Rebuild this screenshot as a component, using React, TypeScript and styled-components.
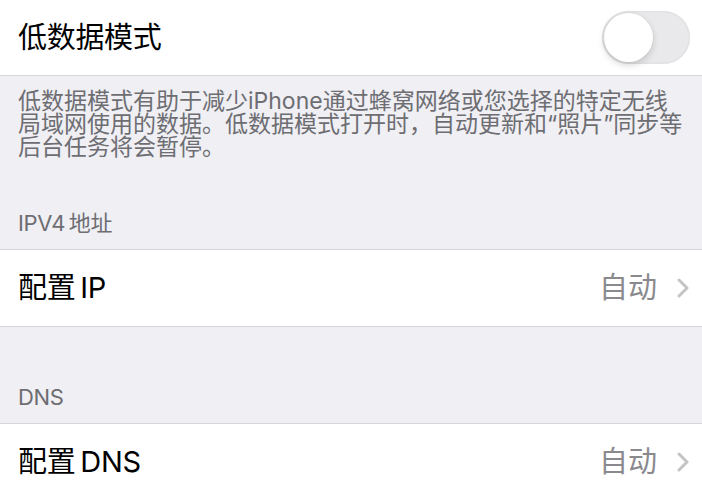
import styled, { createGlobalStyle } from 'styled-components'

const GlobalStyle = createGlobalStyle`
  * {
    box-sizing: border-box;
  }
  body {
    margin: 0;
    background: #efeff4;
    font-family: Inter, "Noto Sans CJK SC", sans-serif;
    -webkit-font-smoothing: antialiased;
  }
`

const footerLines = [
  '低数据模式有助于减少iPhone通过蜂窝网络或您选择的特定无线',
  '局域网使用的数据。低数据模式打开时，自动更新和“照片”同步等',
  '后台任务将会暂停。',
]

function Chevron() {
  return (
    <ChevronIcon width="12" height="20" viewBox="0 0 12 20">
      <path
        d="M2 2 L10 10 L2 18"
        fill="none"
        stroke="#c4c4c7"
        strokeWidth="3"
        strokeLinecap="round"
        strokeLinejoin="round"
      />
    </ChevronIcon>
  )
}

function Toggle({ on = false }: { on?: boolean }) {
  return (
    <SwitchTrack $on={on} role="switch" aria-checked={on}>
      <SwitchKnob />
    </SwitchTrack>
  )
}

function DetailRow({ title, value }: { title: string; value: string }) {
  return (
    <Cell>
      <CellTitle>{title}</CellTitle>
      <Accessory>
        <CellValue>{value}</CellValue>
        <Chevron />
      </Accessory>
    </Cell>
  )
}

export default function App() {
  return (
    <Screen>
      <GlobalStyle />
      <Group $top={false}>
        <Cell $height={75}>
          <CellTitle>低数据模式</CellTitle>
          <Toggle />
        </Cell>
      </Group>

      <Footer>
        {footerLines.map((line) => (
          <FooterLine key={line}>{line}</FooterLine>
        ))}
      </Footer>

      <SectionHeader $top={53}>IPV4 地址</SectionHeader>
      <Group>
        <DetailRow title="配置 IP" value="自动" />
      </Group>

      <SectionHeader $top={59}>DNS</SectionHeader>
      <Group>
        <DetailRow title="配置 DNS" value="自动" />
      </Group>
    </Screen>
  )
}

const Screen = styled.div`
  width: 702px;
  height: 500px;
  overflow: hidden;
  display: flex;
  flex-direction: column;
  background: #efeff4;
`
const Group = styled.div<{ $top?: boolean }>`
  background: #fff;
  border-top: ${({ $top = true }) => ($top ? '1px solid #d6d6da' : 'none')};
  border-bottom: 1px solid #d6d6da;
`
const Cell = styled.div<{ $height?: number }>`
  height: ${({ $height = 76 }) => $height}px;
  padding: 0 12px 0 18px;
  display: flex;
  align-items: center;
  justify-content: space-between;
`
const CellTitle = styled.span`
  font-size: 29px;
  line-height: 34px;
  color: #000;
  white-space: nowrap;
  word-spacing: -3px;
  letter-spacing: -0.3px;
`
const Accessory = styled.div`
  display: flex;
  align-items: center;
  gap: 20px;
`
const CellValue = styled.span`
  font-size: 29px;
  line-height: 34px;
  color: #8a8a8e;
`
const ChevronIcon = styled.svg`
  display: block;
  margin-right: 1px;
`
const SwitchTrack = styled.div<{ $on: boolean }>`
  width: 88px;
  height: 53px;
  padding: 2px;
  border-radius: 27px;
  display: flex;
  align-items: center;
  justify-content: ${({ $on }) => ($on ? 'flex-end' : 'flex-start')};
  background: ${({ $on }) => ($on ? '#34c759' : '#e9e9eb')};
  box-shadow: inset 0 0 0 1.5px #e2e2e5;
  margin-top: -1px;
`
const SwitchKnob = styled.div`
  width: 49px;
  height: 49px;
  border-radius: 50%;
  background: #fff;
  box-shadow: 0 3px 7px rgba(0, 0, 0, 0.16), 0 0 0 0.5px rgba(0, 0, 0, 0.06);
`
const Footer = styled.div`
  padding: 14px 18px 0;
  display: flex;
  flex-direction: column;
  color: #6d6d72;
`
const FooterLine = styled.span`
  display: block;
  height: 23px;
  font-size: 23px;
  line-height: 23px;
  white-space: nowrap;
`
const SectionHeader = styled.div<{ $top: number }>`
  padding: ${({ $top }) => $top}px 18px 15px;
  font-size: 22px;
  line-height: 22px;
  color: #6d6d72;
  white-space: nowrap;
  word-spacing: -2px;
  letter-spacing: -0.4px;
`
